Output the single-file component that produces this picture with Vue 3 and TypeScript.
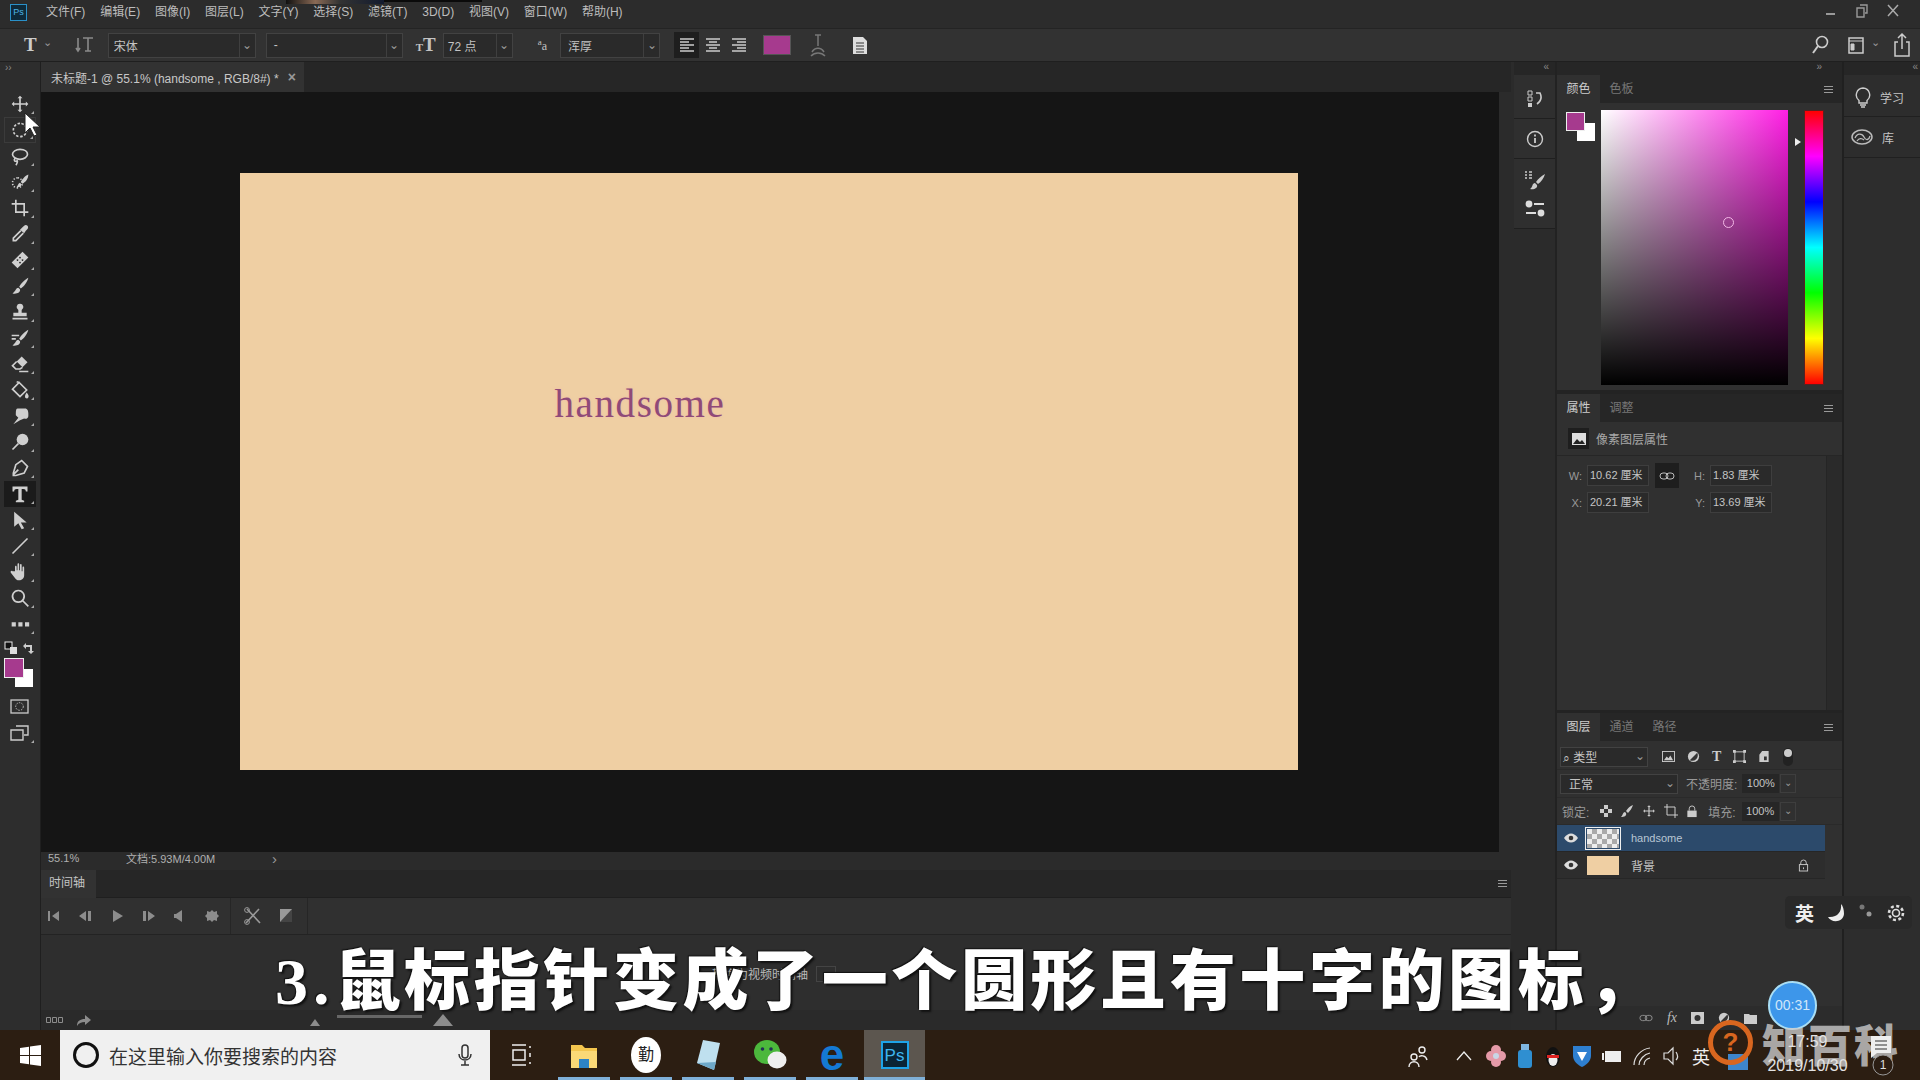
<template>
  <div class="screen">
    <!-- 菜单栏 -->
    <div class="menubar">
      <div class="ps-logo">Ps</div>
      <span v-for="m in menus" :key="m" class="menu">{{ m }}</span>
      <div class="menu-spacer"></div>
      <div class="winbtns">
        <svg width="14" height="14" viewBox="0 0 14 14"><path d="M2 9h9v2H2z" fill="#999" /></svg>
        <svg width="14" height="14" viewBox="0 0 14 14"><path d="M5 1h7v8h-2M2 4h7v9H2z" fill="none" stroke="#999" stroke-width="1.4" /></svg>
        <svg width="14" height="14" viewBox="0 0 14 14"><path d="M2 1l10 11M12 1L2 12" stroke="#aaa" stroke-width="1.5" /></svg>
      </div>
    </div>

    <!-- 选项栏 -->
    <div class="optbar">
      <span class="opt-t">T</span><span class="chev">⌄</span>
      <svg class="opt-orient" width="24" height="24" viewBox="0 0 24 24"><path d="M10 5h10M15 5v13M12 18h6M5 5v13M3 15l2 3 2-3" fill="none" stroke="#8a8a8a" stroke-width="1.6" /></svg>
      <div class="select font-select"><span>宋体</span><i>⌄</i></div>
      <div class="select style-select"><span>-</span><i>⌄</i></div>
      <span class="opt-size"><small>T</small>T</span>
      <div class="select size-select"><span>72 点</span><i>⌄</i></div>
      <span class="opt-aa"><sup>a</sup>a</span>
      <div class="select aa-select"><span>浑厚</span><i>⌄</i></div>
      <div class="align-group">
        <div v-for="(a, i) in aligns" :key="a" class="align" :class="{ on: i === 0 }">
          <svg width="16" height="16" viewBox="0 0 16 16"><path :d="a" stroke="#ccc" stroke-width="1.3" fill="none" /></svg>
        </div>
      </div>
      <div class="text-color"></div>
      <svg class="opt-warp" width="22" height="26" viewBox="0 0 22 26"><path d="M8 3h6M11 3v11M5 20c3-5 9-5 12 0M4 24c4-4 10-4 14 0" fill="none" stroke="#777" stroke-width="1.5" /></svg>
      <svg class="opt-panel" width="20" height="24" viewBox="0 0 20 24"><path d="M3 4h10l4 4v13H3z" fill="#ddd" /><path d="M6 10h8M6 13h8M6 16h8M6 19h8" stroke="#333" /></svg>
      <div class="menu-spacer"></div>
      <svg width="20" height="22" viewBox="0 0 20 22"><circle cx="12" cy="8" r="5.5" fill="none" stroke="#ccc" stroke-width="1.6" /><path d="M8 12l-5 7" stroke="#ccc" stroke-width="2" /></svg>
      <svg class="opt-work" width="18" height="20" viewBox="0 0 18 20"><path d="M2 3h14v15H2z" fill="none" stroke="#ccc" stroke-width="1.5" /><path d="M2 6h14M4 9h3v6H4z" stroke="#ccc" fill="#ccc" stroke-width="1" /></svg>
      <span class="chev work-chev">⌄</span>
      <svg class="opt-share" width="20" height="28" viewBox="0 0 20 28"><path d="M6 11H3v14h14V11h-3M10 18V3M6 7l4-4 4 4" fill="none" stroke="#ccc" stroke-width="1.5" /></svg>
    </div>

    <div class="main">
      <!-- 工具栏 -->
      <div class="tools">
        <div class="tools-head">››</div>
        <div v-for="t in tools" :key="t.name" class="tool" :class="{ active: t.name === 'type', ring: t.name === 'marquee' }">
          <svg width="20" height="20" viewBox="0 0 24 24">
            <path v-if="t.fill" :d="t.fill" fill="#cfcfcf" />
            <path v-if="t.line" :d="t.line" fill="none" stroke="#cfcfcf" stroke-width="2" :stroke-dasharray="t.dash" />
          </svg>
        </div>
        <div class="swap-row">
          <svg width="14" height="14" viewBox="0 0 14 14"><rect x="1" y="1" width="7" height="7" fill="#111" stroke="#eee" /><rect x="6" y="6" width="7" height="7" fill="#ddd" /></svg>
          <svg width="14" height="14" viewBox="0 0 14 14"><path d="M1 5l3-3v2h6v6h2l-3 3-3-3h2V6H4v2z" fill="#ccc" /></svg>
        </div>
        <div class="swatches">
          <div class="sw-bg"></div>
          <div class="sw-fg"></div>
        </div>
        <div class="tool plain mask-tool">
          <svg width="20" height="18" viewBox="0 0 20 18"><rect x="1" y="2" width="17" height="13" fill="none" stroke="#ccc" stroke-width="1.3" /><circle cx="9.5" cy="8.5" r="3.8" fill="none" stroke="#ccc" stroke-dasharray="1.4 1.4" /></svg>
        </div>
        <div class="tool">
          <svg width="20" height="20" viewBox="0 0 20 20"><path d="M6 3h12v9h-4M1 7h12v10H1z" fill="none" stroke="#ccc" stroke-width="1.4" /></svg>
        </div>
      </div>

      <!-- 中间文档区 -->
      <div class="center">
        <div class="tabbar">
          <div class="doc-tab"><span>未标题-1 @ 55.1% (handsome , RGB/8#) *</span><b>×</b></div>
        </div>
        <div class="canvas">
          <div class="doc">
            <span class="doc-text">handsome</span>
          </div>
        </div>
        <div class="statusbar">
          <span class="zoom">55.1%</span>
          <span class="docinfo">文档:5.93M/4.00M</span>
          <span class="more">›</span>
        </div>
        <div class="timeline">
          <div class="tl-head">
            <div class="tl-tab">时间轴</div>
            <div class="hamb dark"><i></i><i></i><i></i></div>
          </div>
          <div class="tl-controls">
            <div class="tl-left">
              <svg v-for="c in tlIcons" :key="c" width="18" height="18" viewBox="0 0 18 18"><path :d="c" fill="#8c8c8c" /></svg>
            </div>
            <div class="tl-cut">
              <svg width="20" height="20" viewBox="0 0 20 20"><path d="M4 3l13 14M16 3L3 17" stroke="#999" stroke-width="1.6" /><circle cx="4" cy="4" r="2.4" fill="none" stroke="#999" /><circle cx="4" cy="16" r="2.4" fill="none" stroke="#999" /></svg>
              <svg width="18" height="20" viewBox="0 0 18 20"><rect x="3" y="3" width="12" height="13" fill="#999" /><path d="M15 3L3 16h12z" fill="#444" /></svg>
            </div>
          </div>
          <div class="tl-body">
            <div class="tl-button"><span>转换为视频时间轴</span><i>⌄</i></div>
          </div>
          <div class="tl-foot">
            <svg width="17" height="7" viewBox="0 0 17 7"><path d="M.5.500h4v5h-4zM6.500.500h4v5h-4zM12.500.500h4v5h-4z" fill="none" stroke="#8c8c8c" /></svg>
            <svg class="tl-share" width="16" height="14" viewBox="0 0 16 14"><path d="M1 13c0-5 3-7 8-7V2l6 5-6 5V9c-4 0-6 1-8 4z" fill="#8c8c8c" /></svg>
            <div class="tl-zoom">
              <svg width="10" height="7" viewBox="0 0 10 7"><path d="M5 0l5 7H0z" fill="#8c8c8c" /></svg>
              <div class="tl-slider"></div>
              <svg width="20" height="12" viewBox="0 0 20 12"><path d="M10 0l10 12H0z" fill="#8c8c8c" /></svg>
            </div>
          </div>
        </div>
      </div>

      <!-- 折叠面板图标 -->
      <div class="icondock">
        <div class="dock-arrow">«</div>
        <div class="dock-group g1">
          <svg width="16" height="20" viewBox="0 0 16 20"><path d="M1 2h4v4H1zM1 8h4v4H1z" fill="none" stroke="#ccc" /><path d="M1 14h4v4H1z" fill="#ccc" /><path d="M9 4h4c2 4 1 8-3 11" fill="none" stroke="#ccc" stroke-width="1.6" /></svg>
        </div>
        <div class="dock-group g2">
          <svg width="18" height="18" viewBox="0 0 18 18"><circle cx="9" cy="9" r="7.5" fill="none" stroke="#ccc" stroke-width="1.4" /><path d="M9 8v5M9 4.5v2" stroke="#ccc" stroke-width="1.8" /></svg>
        </div>
        <div class="dock-group g3">
          <svg width="22" height="22" viewBox="0 0 22 22"><path d="M1 2h2M1 5h2M1 8h2M5 2h3M5 5h3M5 8h3" stroke="#ccc" stroke-width="1.4" /><path d="M21 4C17 6 14 9 12 12l2 2c3-2 6-6 7-10zM11 13c-3 0-2 4-5 6 4 1 8-1 7-4z" fill="#ccc" /></svg>
          <svg width="22" height="18" viewBox="0 0 22 18"><path d="M10 4h10M2 13h10" stroke="#ddd" stroke-width="2" /><circle cx="5" cy="4" r="3.4" fill="#ddd" /><circle cx="17" cy="13" r="3.4" fill="#ddd" /></svg>
        </div>
      </div>

      <!-- 右侧面板 -->
      <div class="panels">
        <div class="panel-arrows"><span>»</span></div>
        <div class="panel color-panel">
          <div class="ptabs">
            <span class="ptab on">颜色</span><span class="ptab">色板</span>
            <div class="hamb"><i></i><i></i><i></i></div>
          </div>
          <div class="color-body">
            <div class="mini-swatch">
              <div class="mini-bg"></div>
              <div class="mini-fg"></div>
            </div>
            <div class="picker"><div class="picker-dot"></div></div>
            <div class="hue-wrap">
              <div class="hue-arrow"></div>
              <div class="hue"></div>
            </div>
          </div>
        </div>

        <div class="panel props-panel">
          <div class="ptabs">
            <span class="ptab on">属性</span><span class="ptab">调整</span>
            <div class="hamb"><i></i><i></i><i></i></div>
          </div>
          <div class="prop-title">
            <div class="prop-icon">
              <svg width="14" height="12" viewBox="0 0 14 12"><rect width="14" height="12" fill="#ddd" /><path d="M1 11l4-5 3 3 2-2 3 4z" fill="#222" /></svg>
            </div>
            <span>像素图层属性</span>
          </div>
          <div class="prop-body">
            <div class="prop-fields">
              <label>W:</label><div class="field">10.62 厘米</div>
              <div class="link"><svg width="16" height="8" viewBox="0 0 16 8"><rect x="1" y="1" width="8" height="6" rx="3" fill="none" stroke="#bbb" /><rect x="7" y="1" width="8" height="6" rx="3" fill="none" stroke="#bbb" /></svg></div>
              <label>H:</label><div class="field">1.83 厘米</div>
              <label>X:</label><div class="field">20.21 厘米</div>
              <div></div>
              <label>Y:</label><div class="field">13.69 厘米</div>
            </div>
            <div class="prop-scroll"></div>
          </div>
        </div>

        <div class="panel layers-panel">
          <div class="ptabs">
            <span class="ptab on">图层</span><span class="ptab">通道</span><span class="ptab">路径</span>
            <div class="hamb"><i></i><i></i><i></i></div>
          </div>
          <div class="lrow filter-row">
            <div class="select kind"><span>⌕ 类型</span><i>⌄</i></div>
            <svg width="13" height="11" viewBox="0 0 14 12"><rect x=".5" y=".5" width="13" height="11" fill="none" stroke="#ccc" /><path d="M2 10l3-4 2 2 2-3 3 5z" fill="#ccc" /></svg>
            <svg width="13" height="13" viewBox="0 0 14 14"><circle cx="7" cy="7" r="6" fill="#ccc" /><path d="M11 3L3 11a6 6 0 0 0 8-8z" fill="#333" /></svg>
            <span class="filter-t">T</span>
            <svg width="13" height="13" viewBox="0 0 14 14"><path d="M2 2h10v10H2z" fill="none" stroke="#ccc" /><path d="M0 0h3v3H0zM11 0h3v3h-3zM0 11h3v3H0zM11 11h3v3h-3z" fill="#ccc" /></svg>
            <svg width="12" height="13" viewBox="0 0 12 14"><path d="M4 1h7v12H1V5z" fill="#ccc" /><path d="M6 7h3v4H6z" fill="#333" /></svg>
            <svg class="filter-toggle" width="10" height="20" viewBox="0 0 10 20"><rect y="1" width="10" height="18" rx="5" fill="#222" /><circle cx="5" cy="6" r="4" fill="#ccc" /></svg>
          </div>
          <div class="lrow blend-row">
            <div class="select blend"><span>正常</span><i>⌄</i></div>
            <span class="dim">不透明度:</span>
            <div class="pct">100%</div><div class="pct-chev">⌄</div>
          </div>
          <div class="lrow lock-row">
            <span class="dim">锁定:</span>
            <svg class="lock-first" width="12" height="12" viewBox="0 0 12 12"><rect width="12" height="12" fill="#ccc" /><path d="M0 0h4v4H0zM8 0h4v4H8zM4 4h4v4H4zM0 8h4v4H0zM8 8h4v4H8z" fill="#333" /></svg>
            <svg width="14" height="14" viewBox="0 0 14 14"><path d="M13 1C10 2 8 4 6 7l2 2c2-2 4-5 5-8zM5 8c-2 0-2 3-4 5 3 0 6-1 5-4z" fill="#ccc" /></svg>
            <svg width="14" height="14" viewBox="0 0 24 24"><path d="M12 2l3 3h-2v6h6V9l3 3-3 3v-2h-6v6h2l-3 3-3-3h2v-6H5v2l-3-3 3-3v2h6V5H9z" fill="#ccc" /></svg>
            <svg width="14" height="14" viewBox="0 0 14 14"><path d="M3 0v11h11M0 3h11v11" fill="none" stroke="#ccc" /></svg>
            <svg width="12" height="13" viewBox="0 0 12 14"><path d="M3 6V4a3 3 0 0 1 6 0v2" fill="none" stroke="#ccc" /><rect x="1" y="6" width="10" height="7" fill="#ccc" /></svg>
            <span class="dim fill-label">填充:</span>
            <div class="pct">100%</div><div class="pct-chev">⌄</div>
          </div>
          <div class="layer selected">
            <svg class="eye" width="16" height="10" viewBox="0 0 16 10"><path d="M1 5c4-6 10-6 14 0-4 6-10 6-14 0z" fill="#ddd" /><circle cx="8" cy="5" r="2.3" fill="#333" /></svg>
            <div class="thumb checker"></div>
            <span>handsome</span>
          </div>
          <div class="layer">
            <svg class="eye" width="16" height="10" viewBox="0 0 16 10"><path d="M1 5c4-6 10-6 14 0-4 6-10 6-14 0z" fill="#ddd" /><circle cx="8" cy="5" r="2.3" fill="#333" /></svg>
            <div class="thumb peach"></div>
            <span class="layer-name">背景</span>
            <svg class="layer-lock" width="11" height="13" viewBox="0 0 12 14"><path d="M3 6V4a3 3 0 0 1 6 0v2" fill="none" stroke="#ccc" /><rect x="1.5" y="6" width="9" height="7" fill="none" stroke="#ccc" /><path d="M6 9v2" stroke="#ccc" /></svg>
          </div>
          <div class="layers-empty"></div>
          <div class="layers-foot">
            <svg width="14" height="10" viewBox="0 0 16 8"><rect x="1" y="1" width="8" height="6" rx="3" fill="none" stroke="#999" /><rect x="7" y="1" width="8" height="6" rx="3" fill="none" stroke="#999" /></svg>
            <span class="fx">fx</span>
            <svg width="13" height="12" viewBox="0 0 13 12"><rect width="13" height="12" fill="#ccc" /><circle cx="6.5" cy="6" r="3" fill="#333" /></svg>
            <svg width="12" height="12" viewBox="0 0 14 14"><circle cx="7" cy="7" r="6" fill="#ccc" /><path d="M11 3L3 11a6 6 0 0 0 8-8z" fill="#333" /></svg>
            <svg width="13" height="11" viewBox="0 0 13 11"><path d="M0 1h5l1 1h7v9H0z" fill="#ccc" /></svg>
          </div>
        </div>
      </div>

      <!-- 学习 / 库 -->
      <div class="rightdock">
        <div class="dock-arrow right">«</div>
        <div class="rd-item rd-learn">
          <svg width="16" height="22" viewBox="0 0 16 22"><path d="M8 1a7 7 0 0 0-4 12.5V16h8v-2.500A7 7 0 0 0 8 1z" fill="none" stroke="#ccc" stroke-width="1.4" /><path d="M5 18h6M6 20h4" stroke="#ccc" stroke-width="1.5" /></svg>
          <span>学习</span>
        </div>
        <div class="rd-item rd-lib">
          <svg width="22" height="16" viewBox="0 0 22 16"><ellipse cx="11" cy="8" rx="10" ry="7" fill="none" stroke="#bbb" stroke-width="1.5" /><path d="M4 9c2-5 7-5 9-1s5 3 6-1M6 12c2-3 5-3 7-1" fill="none" stroke="#bbb" stroke-width="1.3" /></svg>
          <span>库</span>
        </div>
      </div>
    </div>

    <!-- 任务栏 -->
    <div class="taskbar">
      <div class="win-btn">
        <svg width="21" height="21" viewBox="0 0 21 21"><path d="M0 3l9-1.300V10H0zM10 1.500L21 0v10H10zM0 11h9v8.300L0 18zM10 11h11v10l-11-1.500z" fill="#fff" /></svg>
      </div>
      <div class="search">
        <div class="cortana"></div>
        <span>在这里输入你要搜索的内容</span>
        <svg class="mic" width="14" height="24" viewBox="0 0 14 24"><rect x="4" y="2" width="6" height="13" rx="3" fill="none" stroke="#333" stroke-width="1.5" /><path d="M1 11c0 8 12 8 12 0M7 18v4M3 22h8" fill="none" stroke="#333" stroke-width="1.5" /></svg>
      </div>
      <svg class="taskview" width="22" height="24" viewBox="0 0 22 24"><path d="M2 2h14M2 22h14M3 7h12v10H3zM20 3v2M20 10v4M20 19v2" fill="none" stroke="#eee" stroke-width="1.5" /></svg>
      <div class="apps">
        <div class="app run">
          <svg width="28" height="30" viewBox="0 0 28 30"><path d="M1 5h11l3 3h12v5H1z" fill="#f4c64e" /><path d="M1 11h26v17H1z" fill="#fbd977" /><path d="M9 19h10v9H9z" fill="#2d83c5" /></svg>
        </div>
        <div class="app run">
          <div class="app-white">勤</div>
        </div>
        <div class="app run">
          <svg width="28" height="34" viewBox="0 0 28 34"><path d="M9 2l17 3-6 27-17-7z" fill="#bfe0ef" /><path d="M3 25l17 7 2-8z" fill="#6fa9c9" /></svg>
        </div>
        <div class="app run">
          <svg width="34" height="32" viewBox="0 0 34 32"><ellipse cx="14" cy="13" rx="13" ry="12" fill="#4cb83c" /><ellipse cx="24" cy="21" rx="9.500" ry="8.500" fill="#efefef" /><circle cx="9.500" cy="10" r="1.800" fill="#235" /><circle cx="18" cy="10" r="1.800" fill="#235" /></svg>
        </div>
        <div class="app run edge">e</div>
        <div class="app run current"><div class="ps-big">Ps</div></div>
      </div>
      <div class="menu-spacer"></div>
      <div class="tray">
        <svg class="people" width="24" height="24" viewBox="0 0 24 24"><circle cx="8" cy="13" r="3" fill="none" stroke="#eee" stroke-width="1.4" /><circle cx="16" cy="6" r="3" fill="none" stroke="#eee" stroke-width="1.4" /><path d="M3 23c0-7 10-7 10 0M13 13c1-2 7-2 8 3" fill="none" stroke="#eee" stroke-width="1.4" /></svg>
        <svg class="caret" width="16" height="10" viewBox="0 0 16 10"><path d="M1 9l7-8 7 8" fill="none" stroke="#eee" stroke-width="1.3" /></svg>
        <svg width="20" height="24" viewBox="0 0 20 24"><circle cx="10" cy="6" r="5" fill="#e59aa8" /><circle cx="5" cy="12" r="5" fill="#e59aa8" /><circle cx="15" cy="12" r="5" fill="#e59aa8" /><circle cx="10" cy="18" r="5" fill="#e59aa8" /><circle cx="10" cy="12" r="3" fill="#c9d6e6" /></svg>
        <svg width="18" height="26" viewBox="0 0 18 26"><rect x="5" y="1" width="8" height="7" fill="#7fb6e0" /><rect x="2" y="7" width="14" height="18" rx="3" fill="#2f8fd1" /></svg>
        <svg width="18" height="26" viewBox="0 0 18 26"><ellipse cx="9" cy="14" rx="7" ry="10" fill="#111" /><ellipse cx="9" cy="17" rx="4.500" ry="6" fill="#eee" /><path d="M3 12h12v3H3z" fill="#d22" /></svg>
        <svg width="20" height="24" viewBox="0 0 20 24"><path d="M1 2h18v10c0 5-5 9-9 11-4-2-9-6-9-11z" fill="#2e7fd0" /><path d="M5 8h10l-5 9z" fill="#fff" /></svg>
        <svg width="20" height="20" viewBox="0 0 20 20"><rect x="3" y="5" width="16" height="11" fill="#eee" /><path d="M1 7v7" stroke="#eee" stroke-width="2" /></svg>
        <svg width="20" height="20" viewBox="0 0 20 20"><path d="M2 19C2 11 9 3 18 2M7 19c0-5 5-11 11-12M12 19c0-3 2-6 6-7" fill="none" stroke="#ddd" stroke-width="1.2" /></svg>
        <svg width="20" height="20" viewBox="0 0 20 20"><path d="M2 7h4l5-5v16l-5-5H2z" fill="none" stroke="#ddd" stroke-width="1.2" /><path d="M14 6c2 3 2 6 0 8" fill="none" stroke="#ddd" stroke-width="1.2" /></svg>
        <span class="ime">英</span>
        <div class="tray-box"></div>
      </div>
      <div class="clock">
        <span>17:59</span>
        <span>2019/10/30</span>
      </div>
      <svg class="notify" width="26" height="46" viewBox="0 0 26 46"><path d="M3 5h20v17h-14l-6 5z" fill="#eee" /><path d="M7 10h12M7 14h12M7 18h12" stroke="#333" /><circle cx="15" cy="34" r="10" fill="#2b1d12" stroke="#999" /><text x="15" y="38" text-anchor="middle" font-size="12" fill="#ddd" font-family="Liberation Sans, sans-serif">1</text></svg>
    </div>

    <!-- 覆盖层 -->
    <div class="top-photo"></div>
    <svg class="cursor" width="18" height="26" viewBox="0 0 18 26"><path d="M1 1v20l5-5 4 8 3-1-4-8h7z" fill="#fff" stroke="#222" /></svg>
    <div class="subtitle"><span class="sub-num">3.</span>鼠标指针变成了一个圆形且有十字的图标，</div>
    <div class="ime-float">
      <span class="ime-ying">英</span>
      <svg width="20" height="20" viewBox="0 0 20 20"><path d="M15 1c1 8-4 14-13 13 3 6 15 6 16-3 0-4-1-8-3-10z" fill="#eee" /></svg>
      <svg width="16" height="18" viewBox="0 0 16 18"><circle cx="4" cy="3" r="2.500" fill="#777" /><circle cx="11" cy="10" r="2.500" fill="#999" /></svg>
      <svg width="20" height="20" viewBox="0 0 20 20"><circle cx="10" cy="10" r="3.500" fill="none" stroke="#ddd" stroke-width="1.600" /><circle cx="10" cy="10" r="7" fill="none" stroke="#ddd" stroke-width="2.600" stroke-dasharray="3 2.500" /></svg>
    </div>
    <div class="timer">00:31</div>
    <div class="watermark">
      <div class="wm-q">?</div>
      <span>知百科</span>
    </div>
  </div>
</template>

<script setup lang="ts">
interface Tool {
  name: string
  fill?: string
  line?: string
  dash?: string
}

const menus: string[] = [
  '文件(F)', '编辑(E)', '图像(I)', '图层(L)', '文字(Y)', '选择(S)',
  '滤镜(T)', '3D(D)', '视图(V)', '窗口(W)', '帮助(H)'
]

const aligns: string[] = [
  'M1 2h14M1 5h9M1 8h14M1 11h9M1 14h14',
  'M1 2h14M4 5h8M1 8h14M4 11h8M1 14h14',
  'M1 2h14M6 5h9M1 8h14M6 11h9M1 14h14'
]

// 工具栏图标，顺序同 PS 默认
const tools: Tool[] = [
  { name: 'move', fill: 'M12 2l3 3h-2v6h6V9l3 3-3 3v-2h-6v6h2l-3 3-3-3h2v-6H5v2l-3-3 3-3v2h6V5H9z' },
  { name: 'marquee', line: 'M12 4a8 8 0 1 0 .01 0', dash: '3 2' },
  { name: 'lasso', line: 'M12 4c6 0 9 3 9 6s-4 6-9 6-9-3-9-6 4-6 9-6zM6 15c-2 2 0 4 2 3s0 4-1 5' },
  { name: 'quick', line: 'M9 7a6 6 0 1 0 .01 0', dash: '1.500 2', fill: 'M22 3c-3 1-7 5-9 9l2 2c4-2 7-6 7-11zM12 13c-2 0-2 3-4 5 3 1 6-1 6-3z' },
  { name: 'crop', line: 'M7 2v15h15M2 7h15v15' },
  { name: 'eyedropper', line: 'M13 8l-9 9v3h3l9-9', fill: 'M12 7l3-3 2-2c1-1 3-1 4 0s1 3 0 4l-2 2-2 3z' },
  { name: 'heal', fill: 'M15 2l7 7-13 13-7-7zM9 11a1 1 0 1 0 .01 0M12 14a1 1 0 1 0 .01 0M12 8a1 1 0 1 0 .01 0M15 11a1 1 0 1 0 .01 0' },
  { name: 'brush', fill: 'M22 2c-4 2-9 7-11 11l2 2c4-3 8-8 9-13zM10 14c-3 0-3 4-7 7 5 1 10-1 9-5z' },
  { name: 'stamp', fill: 'M12 2a4 4 0 0 1 2 7.500V13h6v4H4v-4h6V9.500A4 4 0 0 1 12 2zM3 19h18v2H3z' },
  { name: 'history', line: 'M2 9h9M2 13h5', fill: 'M22 2c-4 2-9 7-11 11l2 2c4-3 8-8 9-13zM10 14c-3 0-3 4-7 7 5 1 10-1 9-5z' },
  { name: 'eraser', fill: 'M14 3l7 7-6 6-7-7z', line: 'M8 9l-5 5 4 4h5l3-2M11 21h11' },
  { name: 'bucket', line: 'M11 3l9 9-8 8-9-9zM11 3l-3-1', fill: 'M20 15c2 3 3 4 2 6s-4 1-4-1c0-2 1-3 2-5z' },
  { name: 'smudge', fill: 'M9 3h9c3 0 4 3 4 6v3c0 3-3 4-5 3l-5 2-8 5 6-8-3-3c0-4 0-8 2-8z' },
  { name: 'dodge', fill: 'M15 2a7 7 0 1 1 0 14 7 7 0 0 1 0-14z', line: 'M10 14l-7 7' },
  { name: 'pen', line: 'M14 3l7 7-4 8-10 3-3 0 0-3 3-10zM4 20l6-6' },
  { name: 'type', fill: 'M3 3h18v6h-2c0-2-1-3-3-3h-2v13l3 1v2H7v-2l3-1V6H8c-2 0-3 1-3 3H3z' },
  { name: 'path', fill: 'M5 2l15 13h-7l4 7-3 1-4-7-5 4z' },
  { name: 'line', line: 'M3 21L21 3' },
  { name: 'hand', fill: 'M6 11V6c0-2 2-2 2 0v4h1V3c0-2 2-2 2 0v7h1V4c0-2 2-2 2 0v7h1V7c0-2 2-2 2 0v9c0 4-3 6-6 6s-4-1-6-4l-4-5c-1-2 1-3 2-2z' },
  { name: 'zoom', line: 'M10 3a7 7 0 1 0 .01 0M15 15l7 7' },
  { name: 'more', fill: 'M2 10h5v5H2zM10 10h5v5h-5zM18 10h5v5h-5z' }
]

const tlIcons: string[] = [
  'M3 4h2v10H3zM14 4v10L7 9z',
  'M2 9l7-5v10zM11 4h3v10h-3z',
  'M5 3l10 6-10 6z',
  'M3 4h3v10H3zM8 4l7 5-7 5z',
  'M11 3v12L5 11H3V7h2z',
  'M9 3l2 2 3-1v3l2 2-2 2v3l-3-1-2 2-2-2-3 1v-3L2 9l2-2V4l3 1z'
]
</script>

<style>
html, body {
  margin: 0;
  background: #2b2b2b;
}
</style>

<style scoped>
.screen {
  position: relative;
  width: 1920px;
  height: 1080px;
  overflow: hidden;
  display: flex;
  flex-direction: column;
  background: #2b2b2b;
  color: #c4c4c4;
  font-family: "Liberation Sans", "Noto Sans CJK SC", sans-serif;
  font-size: 12px;
}
svg { flex: none; display: block; }

.menubar {
  height: 28px;
  flex: none;
  display: flex;
  align-items: center;
  background: #2c2c2c;
  padding: 0 0 4px 10px;
  box-sizing: border-box;
}
.ps-logo {
  width: 15px;
  height: 15px;
  border: 1px solid #2a90c8;
  background: #0e2a3a;
  color: #4fb4e6;
  font-size: 9px;
  line-height: 15px;
  text-align: center;
  margin-right: 19px;
}
.menu {
  margin-right: 14.8px;
  color: #bdbdbd;
  font-size: 12px;
  line-height: 16px;
  white-space: nowrap;
}
.menu-spacer { flex: 1; }
.winbtns {
  display: flex;
  gap: 17px;
  align-items: center;
  padding: 0 20px 2px 0;
}

.optbar {
  height: 34px;
  flex: none;
  display: flex;
  align-items: center;
  background: #323232;
  border-top: 1px solid #242424;
  border-bottom: 1px solid #1f1f1f;
  box-sizing: border-box;
  padding: 0 8px 0 24px;
}
.opt-t {
  font-family: "Liberation Serif", serif;
  font-weight: 700;
  font-size: 19px;
  color: #ccc;
}
.chev {
  color: #999;
  font-size: 11px;
  margin: -6px 0 0 6px;
}
.opt-orient { margin: 0 11px 0 21px; }
.select {
  height: 25px;
  box-sizing: border-box;
  display: flex;
  align-items: center;
  justify-content: space-between;
  border: 1px solid #424242;
  background: #2a2a2a;
  color: #c4c4c4;
  font-size: 12px;
  padding-left: 2px;
}
.select i {
  font-style: normal;
  color: #999;
  width: 15px;
  text-align: center;
  line-height: 23px;
  height: 23px;
  border-left: 1px solid #3f3f3f;
}
.font-select { width: 148px; margin-right: 10px; padding-left: 5px; }
.style-select { width: 137px; padding-left: 7px; }
.opt-size {
  font-family: "Liberation Serif", serif;
  font-weight: 700;
  font-size: 19px;
  margin: 0 7px 0 13px;
}
.opt-size small { font-size: 11px; }
.size-select { width: 70px; padding-left: 4px; }
.opt-aa {
  font-family: "Liberation Serif", serif;
  font-size: 12px;
  margin: 0 13px 0 25px;
}
.opt-aa sup { font-size: 9px; }
.aa-select { width: 100px; padding-left: 7px; }
.align-group {
  display: flex;
  margin-left: 14px;
  gap: 1px;
}
.align {
  width: 25px;
  height: 26px;
  display: flex;
  align-items: center;
  justify-content: center;
}
.align.on { background: #1e1e1e; }
.text-color {
  width: 26px;
  height: 18px;
  background: #a63a8e;
  border: 1px solid #555;
  margin-left: 12px;
}
.opt-warp { margin-left: 16px; }
.opt-panel { margin-left: 21px; }
.opt-work { margin-left: 17px; }
.work-chev { margin: -6px 6px 0 6px; }
.opt-share { margin: 0 0 0 6px; }

.main {
  flex: 1;
  min-height: 0;
  display: flex;
  background: #2b2b2b;
}

.tools {
  width: 41px;
  flex: none;
  box-sizing: border-box;
  border-right: 1px solid #1f1f1f;
  display: flex;
  flex-direction: column;
  align-items: center;
  background: #2d2d2d;
}
.tools-head {
  height: 29px;
  width: 100%;
  flex: none;
  color: #888;
  font-size: 10px;
  padding-left: 5px;
  box-sizing: border-box;
}
.tool {
  position: relative;
  width: 32px;
  height: 26px;
  flex: none;
  display: flex;
  align-items: center;
  justify-content: center;
  box-sizing: border-box;
}
.tool::after {
  content: "";
  position: absolute;
  right: 2px;
  bottom: 3px;
  border-left: 3px solid transparent;
  border-bottom: 3px solid #aaa;
}
.tool.plain::after { display: none; }
.tool.active { background: #1b1b1b; }
.tool.ring { border: 1px solid #3b3b3b; }
.swap-row {
  width: 32px;
  display: flex;
  justify-content: space-between;
  margin-top: 4px;
}
.swatches {
  position: relative;
  width: 32px;
  height: 34px;
  flex: none;
  margin-top: 3px;
}
.sw-fg, .sw-bg { position: absolute; }
.sw-fg {
  left: 0;
  top: 0;
  width: 18px;
  height: 18px;
  background: #a63a8e;
  border: 1px solid #eee;
}
.sw-bg {
  left: 11px;
  top: 11px;
  width: 18px;
  height: 18px;
  background: #fff;
}
.mask-tool { margin-top: 2px; }

.center {
  flex: 1;
  min-width: 0;
  display: flex;
  flex-direction: column;
}
.tabbar {
  height: 30px;
  flex: none;
  background: #262626;
  display: flex;
}
.doc-tab {
  width: 263px;
  box-sizing: border-box;
  padding: 0 8px 0 10px;
  background: #323232;
  display: flex;
  align-items: center;
  justify-content: space-between;
  font-size: 12px;
  color: #c8c8c8;
  white-space: nowrap;
}
.doc-tab b { color: #999; font-size: 14px; font-weight: 700; }
.canvas {
  flex: 1;
  min-height: 0;
  margin-right: 12px;
  display: flex;
  align-items: center;
  justify-content: center;
  background: #151515;
  padding: 0 3px 2px 0;
}
.doc {
  position: relative;
  width: 1058px;
  height: 597px;
  flex: none;
  background: #efcfa3;
}
.doc-text {
  position: absolute;
  left: 315px;
  top: 208px;
  font-family: "Liberation Serif", serif;
  font-size: 39px;
  letter-spacing: 1.6px;
  color: #8f4a78;
  text-shadow: 0 0 3px #efb9a9;
}
.statusbar {
  height: 18px;
  flex: none;
  display: flex;
  align-items: center;
  background: #2b2b2b;
  font-size: 11px;
  color: #b0b0b0;
  padding-bottom: 6px;
  box-sizing: border-box;
}
.zoom { width: 45px; padding-left: 7px; box-sizing: border-box; }
.docinfo { width: 186px; padding-left: 40px; box-sizing: border-box; }
.more { color: #999; font-size: 15px; }
.timeline { flex: none; display: flex; flex-direction: column; height: 160px; }
.tl-head {
  height: 28px;
  flex: none;
  display: flex;
  justify-content: space-between;
  align-items: center;
  background: #262626;
  border-bottom: 1px solid #1f1f1f;
  box-sizing: border-box;
}
.tl-tab {
  width: 55px;
  height: 28px;
  line-height: 26px;
  padding-left: 8px;
  box-sizing: border-box;
  background: #323232;
  color: #c4c4c4;
  font-size: 12px;
}
.hamb {
  display: flex;
  flex-direction: column;
  gap: 2px;
  width: 9px;
  margin-left: auto;
}
.hamb i {
  display: block;
  height: 1px;
  background: #9a9a9a;
}
.hamb.dark { margin-right: 4px; }
.tl-controls {
  height: 37px;
  flex: none;
  display: flex;
  align-items: center;
  border-bottom: 1px solid #232323;
  box-sizing: border-box;
  background: #303030;
  padding-left: 2px;
}
.tl-left {
  display: flex;
  gap: 13.5px;
  padding: 0 9px 0 2px;
  height: 100%;
  align-items: center;
  border-right: 1px solid #262626;
}
.tl-cut {
  display: flex;
  gap: 14px;
  align-items: center;
  height: 100%;
  padding: 0 12px;
  border-right: 1px solid #262626;
}
.tl-body {
  flex: 1;
  background: #2e2e2e;
  display: flex;
  align-items: center;
  padding-left: 671px;
}
.tl-button {
  display: flex;
  align-items: center;
  gap: 8px;
  font-size: 12px;
  color: #bbb;
  white-space: nowrap;
  margin-top: 2px;
}
.tl-button i {
  font-style: normal;
  width: 20px;
  height: 16px;
  line-height: 11px;
  text-align: center;
  border: 1px solid #444;
  box-sizing: border-box;
}
.tl-foot {
  height: 20px;
  flex: none;
  display: flex;
  align-items: center;
  padding-left: 5px;
  background: #2a2a2a;
}
.tl-share { margin-left: 13px; }
.tl-zoom {
  display: flex;
  align-items: flex-end;
  margin-left: 218px;
}
.tl-slider {
  width: 85px;
  height: 3px;
  background: #666;
  margin: 0 11px 8px 17px;
}

.icondock {
  width: 46px;
  flex: none;
  display: flex;
  flex-direction: column;
  align-items: stretch;
  box-sizing: border-box;
  background: #2b2b2b;
  padding-left: 3px;
  border-right: 2px solid #222;
}
.dock-arrow {
  height: 13px;
  flex: none;
  color: #888;
  font-size: 10px;
  line-height: 10px;
  text-align: right;
  padding-right: 6px;
  background: #262626;
}
.dock-group {
  display: flex;
  flex: none;
  flex-direction: column;
  align-items: center;
  justify-content: center;
  border-bottom: 1px solid #1f1f1f;
  background: #2f2f2f;
  box-sizing: border-box;
}
.g1 { height: 44px; padding-top: 5px; }
.g2 { height: 40px; }
.g3 { height: 70px; gap: 8px; }

.panels {
  width: 285px;
  flex: none;
  display: flex;
  flex-direction: column;
  background: #1e1e1e;
}
.panel-arrows {
  height: 13px;
  flex: none;
  color: #888;
  font-size: 10px;
  line-height: 10px;
  text-align: right;
  padding-right: 20px;
  background: #262626;
}
.panel {
  display: flex;
  flex-direction: column;
  background: #303030;
}
.color-panel { height: 319px; flex: none; border-bottom: 4px solid #232323; box-sizing: border-box; }
.ptabs {
  height: 28px;
  flex: none;
  display: flex;
  align-items: center;
  background: #262626;
  padding-right: 9px;
}
.ptab {
  width: 43px;
  height: 28px;
  line-height: 28px;
  text-align: center;
  color: #777;
  font-size: 12px;
}
.ptab.on { background: #303030; color: #cdcdcd; }
.color-body {
  flex: 1;
  display: flex;
  padding: 7px 0 0 9px;
}
.mini-swatch {
  position: relative;
  width: 35px;
  height: 36px;
  flex: none;
}
.mini-fg {
  position: absolute;
  left: 0;
  top: 2px;
  width: 17px;
  height: 17px;
  background: #a63a8e;
  border: 1px solid #eee;
}
.mini-bg {
  position: absolute;
  left: 11px;
  top: 13px;
  width: 18px;
  height: 18px;
  background: #fff;
}
.picker {
  position: relative;
  width: 187px;
  height: 275px;
  flex: none;
  background:
    linear-gradient(to top, #000, rgba(0, 0, 0, 0)),
    linear-gradient(to right, #fff, #ff1fe4);
}
.picker-dot {
  position: absolute;
  left: 122px;
  top: 107px;
  width: 9px;
  height: 9px;
  border: 1px solid #f3b7e6;
  border-radius: 50%;
}
.hue-wrap {
  position: relative;
  margin-left: 16px;
}
.hue {
  width: 20px;
  height: 275px;
  border: 1px solid #5a2020;
  box-sizing: border-box;
  background: linear-gradient(to bottom,
    #ff0000 0%, #ff00ff 16.6%, #0000ff 33.3%, #00ffff 50%,
    #00ff00 66.6%, #ffff00 83.3%, #ff0000 100%);
}
.hue-arrow {
  position: absolute;
  left: -9px;
  top: 28px;
  border-left: 6px solid #eee;
  border-top: 4px solid transparent;
  border-bottom: 4px solid transparent;
}
.props-panel { height: 316px; flex: none; }
.prop-title {
  height: 33px;
  flex: none;
  display: flex;
  align-items: center;
  gap: 7px;
  padding-left: 11px;
  border-bottom: 1px solid #262626;
  font-size: 12px;
  color: #a8a8a8;
}
.prop-icon {
  width: 21px;
  height: 21px;
  background: #1e1e1e;
  display: flex;
  align-items: center;
  justify-content: center;
}
.prop-body {
  flex: 1;
  display: flex;
}
.prop-fields {
  flex: 1;
  height: 60px;
  padding: 6px 0 0 2px;
  display: grid;
  grid-template-columns: 28px 62px 36px 25px 62px;
  grid-auto-rows: 27px;
  align-items: center;
  justify-content: start;
}
.prop-fields label {
  text-align: right;
  padding-right: 5px;
  color: #9a9a9a;
  font-size: 11px;
}
.field {
  height: 19px;
  line-height: 19px;
  border: 1px solid #3e3e3e;
  background: #2a2a2a;
  color: #c4c4c4;
  font-size: 11px;
  padding-left: 2px;
  white-space: nowrap;
}
.link {
  width: 24px;
  height: 25px;
  background: #1e1e1e;
  display: flex;
  align-items: center;
  justify-content: center;
  justify-self: center;
}
.prop-scroll {
  width: 15px;
  flex: none;
  background: #2a2a2a;
  border-left: 1px solid #252525;
}
.layers-panel { flex: 1; min-height: 0; border-top: 3px solid #232323; }
.lrow {
  flex: none;
  display: flex;
  align-items: center;
  border-bottom: 1px solid #2a2a2a;
}
.filter-row { height: 29px; padding: 3px 0 0 3px; gap: 12px; box-sizing: border-box; }
.kind { width: 88px; height: 20px; margin-right: 2px; }
.kind i, .blend i { border-left: 0; }
.filter-t {
  font-family: "Liberation Serif", serif;
  font-weight: 700;
  font-size: 14px;
  color: #ccc;
}
.filter-toggle { margin-left: 1px; }
.blend-row { height: 27px; padding-left: 3px; }
.blend { width: 118px; height: 20px; margin-right: 8px; padding-left: 8px; }
.dim { color: #999; font-size: 12px; white-space: nowrap; }
.pct {
  width: 37px;
  height: 19px;
  line-height: 19px;
  background: #262626;
  color: #c4c4c4;
  font-size: 11px;
  margin-left: 5px;
  text-align: center;
}
.pct-chev {
  width: 16px;
  height: 19px;
  margin-left: 1px;
  line-height: 15px;
  text-align: center;
  border: 1px solid #3e3e3e;
  box-sizing: border-box;
  color: #999;
  font-size: 10px;
}
.lock-row { height: 26px; padding-left: 5px; gap: 8px; }
.lock-first { margin-left: 3px; }
.fill-label { margin-left: 2px; }
.lock-row .pct { margin-left: -2px; }
.lock-row .pct-chev { margin-left: -7px; }
.layer {
  width: 268px;
  height: 26px;
  flex: none;
  display: flex;
  align-items: center;
  background: #2d2d2d;
  font-size: 11px;
  color: #c4c4c4;
  border-bottom: 1px solid #262626;
}
.layer.selected { background: #2c4a6b; color: #b9c6d4; }
.eye { margin: 0 8px 0 6px; }
.thumb {
  width: 32px;
  height: 19px;
  margin-right: 12px;
  flex: none;
}
.checker {
  background: repeating-conic-gradient(#aaa 0 25%, #eee 0 50%) 0 0 / 10px 10px;
  outline: 1px solid #eee;
  outline-offset: 1px;
}
.peach { background: #efcfa3; }
.layer-name { font-size: 12px; flex: 1; }
.layer-lock { margin-right: 16px; }
.layers-empty { flex: 1; }
.layers-foot {
  height: 24px;
  flex: none;
  display: flex;
  align-items: center;
  justify-content: flex-end;
  gap: 14px;
  padding-right: 85px;
  background: #2c2c2c;
}
.fx {
  font-family: "Liberation Serif", serif;
  font-style: italic;
  font-size: 14px;
  color: #bbb;
}

.rightdock {
  width: 78px;
  flex: none;
  display: flex;
  flex-direction: column;
  box-sizing: border-box;
  background: #2d2d2d;
  border-left: 2px solid #202020;
}
.dock-arrow.right { padding-right: 2px; }
.rd-item {
  display: flex;
  flex: none;
  align-items: center;
  gap: 9px;
  border-bottom: 1px solid #202020;
  color: #c4c4c4;
  font-size: 12px;
}
.rd-learn { height: 42px; padding: 4px 0 0 11px; box-sizing: border-box; }
.rd-lib { height: 41px; padding-left: 7px; box-sizing: border-box; }

.taskbar {
  height: 50px;
  flex: none;
  display: flex;
  align-items: center;
  background: #2c1e12;
}
.win-btn {
  width: 60px;
  display: flex;
  justify-content: center;
}
.search {
  width: 430px;
  height: 50px;
  display: flex;
  align-items: center;
  background: #f0f0f0;
  color: #333;
  font-size: 19px;
  box-sizing: border-box;
  padding: 0 18px 0 13px;
}
.cortana {
  width: 26px;
  height: 26px;
  border-radius: 50%;
  border: 3px solid #111;
  box-sizing: border-box;
  margin-right: 10px;
  flex: none;
}
.mic { margin-left: auto; }
.taskview { margin: 0 26px 0 20px; }
.apps {
  display: flex;
  align-items: stretch;
  height: 50px;
  gap: 10px;
}
.app {
  position: relative;
  width: 52px;
  display: flex;
  align-items: center;
  justify-content: center;
}
.app.run::after {
  content: "";
  position: absolute;
  left: 0;
  right: 0;
  bottom: 0;
  height: 3px;
  background: #7fb0d8;
}
.app-white {
  width: 30px;
  height: 36px;
  border-radius: 50%;
  background: #fff;
  color: #222;
  font-size: 16px;
  line-height: 36px;
  text-align: center;
}
.edge {
  color: #1479d4;
  font-size: 44px;
  font-weight: 700;
  line-height: 40px;
}
.current {
  width: 61px;
  background: #5c564f;
  margin-left: -4px;
}
.ps-big {
  width: 28px;
  height: 28px;
  box-sizing: border-box;
  border: 2px solid #1ea3e8;
  background: #0a2436;
  color: #3fb5ee;
  font-size: 17px;
  line-height: 25px;
  text-align: center;
}
.tray {
  display: flex;
  align-items: center;
  gap: 10px;
  margin-right: 172px;
  padding-top: 2px;
}
.people { margin-right: 16px; }
.caret { margin-right: 4px; }
.ime { color: #eee; font-size: 18px; }
.tray-box {
  width: 20px;
  height: 16px;
  margin: 12px 0 0 8px;
  background: #3e86cc;
}
.clock {
  position: absolute;
  left: 1765px;
  bottom: 2px;
  width: 85px;
  z-index: 2;
  display: flex;
  flex-direction: column;
  align-items: center;
  color: #e2e2e2;
  font-size: 16px;
  line-height: 24px;
  white-space: nowrap;
}
.notify {
  position: absolute;
  right: 26px;
  bottom: 3px;
  z-index: 2;
}

/* 盖在最上层的东西 */
.top-photo {
  position: absolute;
  left: 286px;
  top: 0;
  width: 98px;
  height: 4px;
  background: linear-gradient(to right, #101010, #8a6a55 30%, #333 55%, #121a2e);
  box-shadow: 98px -2px 0 0 #0a0a0a;
}
.cursor {
  position: absolute;
  left: 24px;
  top: 112px;
}
.subtitle {
  position: absolute;
  left: 275px;
  top: 933px;
  font-family: "Noto Sans CJK SC", sans-serif;
  font-weight: 900;
  font-size: 66px;
  letter-spacing: 3.6px;
  line-height: 84px;
  color: #fff;
  white-space: nowrap;
  text-shadow: 2px 2px 2px #111, -1px -1px 1px #111;
}
.sub-num {
  font-family: "Liberation Serif", serif;
  font-weight: 700;
  letter-spacing: 5px;
}
.ime-float {
  position: absolute;
  left: 1785px;
  top: 896px;
  width: 127px;
  height: 33px;
  box-sizing: border-box;
  padding: 0 6px 0 10px;
  border-radius: 5px;
  background: #292929;
  display: flex;
  align-items: center;
  justify-content: space-between;
}
.ime-ying {
  color: #eee;
  font-weight: 700;
  font-size: 19px;
}
.timer {
  position: absolute;
  left: 1768px;
  top: 981px;
  width: 49px;
  height: 49px;
  box-sizing: border-box;
  border: 2px solid #a9def5;
  border-radius: 50%;
  background: #3d96ea;
  color: #cfe7fa;
  font-size: 14px;
  line-height: 45px;
  text-align: center;
}
.watermark {
  position: absolute;
  left: 1708px;
  top: 1020px;
  z-index: 1;
  display: flex;
  align-items: center;
  gap: 9px;
}
.wm-q {
  width: 45px;
  height: 45px;
  box-sizing: border-box;
  border: 5px solid #d9661f;
  border-radius: 50%;
  color: #d9661f;
  font-size: 26px;
  font-weight: 700;
  line-height: 35px;
  text-align: center;
}
.watermark span {
  font-family: "Noto Sans CJK SC", sans-serif;
  font-weight: 900;
  font-size: 44px;
  line-height: 44px;
  letter-spacing: 2px;
  color: rgba(205, 205, 205, 0.8);
}
</style>
